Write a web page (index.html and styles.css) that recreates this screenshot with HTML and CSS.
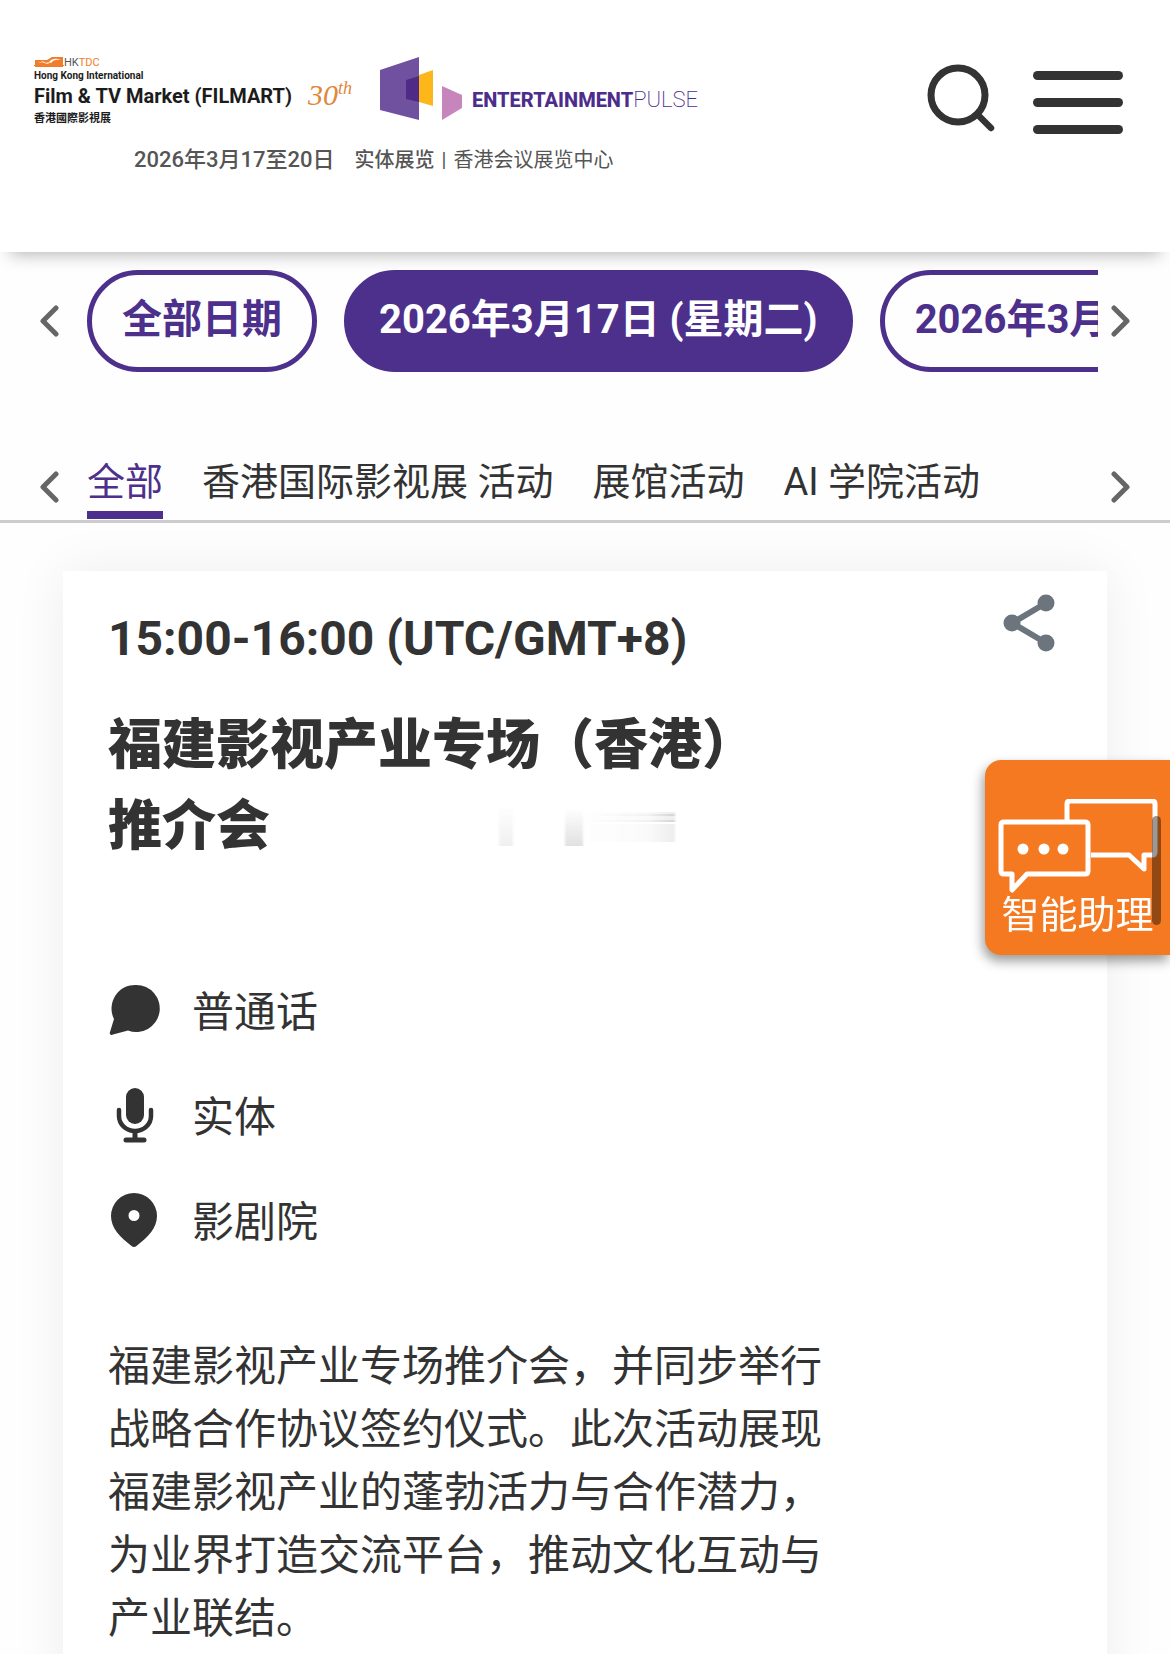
FILE: index.html
```html
<!DOCTYPE html>
<html lang="zh-CN">
<head>
    <meta charset="UTF-8">
    <meta name="viewport" content="width=device-width, initial-scale=1.0">
    <title>香港国际影视展 活动</title>
    <link rel="stylesheet" href="styles.css">
</head>
<body>

    <header class="header">
        <div class="branding">
            <div class="logos">
                <a class="filmart" href="#">
                    <span class="hktdc">
                        <svg width="30" height="10" viewBox="0 0 30 10" aria-hidden="true">
                            <path fill="#ef7d2b" d="M1 0h28v10H1z"/>
                            <path fill="#fff" d="M1 0h17l-5 3H1zM4 6c3-2 6-2 8 0 2-1 3-1 4 0-3 1-4 1-5 0-2-1-4-1-7 0zM15 5c3-4 8-4 12-2-5-1-8 0-10 3z"/>
                            <path stroke="#ef7d2b" d="M0 8.500h30"/>
                        </svg>
                        <span>HK<b>TDC</b></span>
                    </span>
                    <span class="filmart-small">Hong Kong International</span>
                    <span class="filmart-name">Film &amp; TV Market (FILMART)</span>
                    <span class="filmart-tc" lang="zh-HK">香港國際影視展</span>
                </a>
                <span class="anniversary">30<sup>th</sup></span>
                <a class="pulse" href="#">
                    <svg width="84" height="64" viewBox="0 0 84 64" aria-hidden="true">
                        <path fill="#70519f" d="M0 13 39 0v63L0 53z"/>
                        <path fill="#fdb71a" d="m39 18 14-5v36l-14-4z"/>
                        <path fill="#4f2b85" d="m26 23 13-4v26l-13-3z"/>
                        <path fill="#c786bb" d="m62 29 20 9v13L62 63z"/>
                    </svg>
                    <span class="pulse-name"><b>ENTERTAINMENT</b>PULSE</span>
                </a>
            </div>
            <p class="event-date"><b>2026年3月17至20日</b><span><em>实体展览</em><i>|</i>香港会议展览中心</span></p>
        </div>
        <div class="tools">
            <button class="icon-btn" aria-label="搜索">
                <svg width="68" height="68" viewBox="0 0 68 68" fill="none" stroke="#333">
                    <circle cx="31" cy="31" r="27" stroke-width="7"/>
                    <path d="m51 51 13 13" stroke-width="6.500" stroke-linecap="round"/>
                </svg>
            </button>
            <button class="icon-btn" aria-label="菜单">
                <svg width="90" height="64" viewBox="0 0 90 64" fill="#333">
                    <rect width="90" height="9" rx="4.500"/>
                    <rect y="27" width="90" height="9" rx="4.500"/>
                    <rect y="54" width="90" height="9" rx="4.500"/>
                </svg>
            </button>
        </div>
    </header>

    <main>
        <div class="slider dates">
            <button class="arrow" aria-label="上一个日期">
                <svg width="19" height="32" viewBox="0 0 19 32"><path d="M16 3 3 16l13 13"/></svg>
            </button>
            <div class="slider-track">
                <button class="pill">全部日期</button>
                <button class="pill active">2026年3月17日 (星期二)</button>
                <button class="pill">2026年3月18日 (星期三)</button>
            </div>
            <button class="arrow" aria-label="下一个日期">
                <svg width="19" height="32" viewBox="0 0 19 32"><path d="m3 3 13 13L3 29"/></svg>
            </button>
        </div>

        <nav class="slider tabs">
            <button class="arrow" aria-label="上一个分类">
                <svg width="19" height="32" viewBox="0 0 19 32"><path d="M16 3 3 16l13 13"/></svg>
            </button>
            <div class="slider-track">
                <a class="tab active" href="#">全部</a>
                <a class="tab" href="#">香港国际影视展 活动</a>
                <a class="tab" href="#">展馆活动</a>
                <a class="tab" href="#">AI 学院活动</a>
            </div>
            <button class="arrow" aria-label="下一个分类">
                <svg width="19" height="32" viewBox="0 0 19 32"><path d="m3 3 13 13L3 29"/></svg>
            </button>
        </nav>

        <article class="card">
            <div class="card-top">
                <p class="time">15:00-16:00 (UTC/GMT+8)</p>
                <button class="icon-btn" aria-label="分享">
                    <svg width="52" height="58" viewBox="0 0 52 58" fill="#6c757d">
                        <path d="M43 9 9 29l34 20" fill="none" stroke="#6c757d" stroke-width="6"/>
                        <circle cx="43" cy="9" r="8.500"/>
                        <circle cx="9" cy="29" r="8.500"/>
                        <circle cx="43" cy="49" r="8.500"/>
                    </svg>
                </button>
            </div>
            <h2 class="title">福建影视产业专场（香港）推介会</h2>
            <svg class="smudge" width="196" height="40" viewBox="0 0 196 40" aria-hidden="true">
                <defs>
                    <linearGradient id="fadeDown" x2="0" y2="1">
                        <stop offset="0" stop-color="#999" stop-opacity="0"/>
                        <stop offset="1" stop-color="#999" stop-opacity=".3"/>
                    </linearGradient>
                    <linearGradient id="fadeRight">
                        <stop offset="0" stop-color="#999" stop-opacity="0"/>
                        <stop offset=".7" stop-color="#999" stop-opacity=".08"/>
                        <stop offset="1" stop-color="#999" stop-opacity=".3"/>
                    </linearGradient>
                    <filter id="soften" x="-.1" y="-.1" width="1.2" height="1.2">
                        <feGaussianBlur stdDeviation="1.2 .5"/>
                    </filter>
                </defs>
                <g filter="url(#soften)">
                    <path fill="url(#fadeDown)" opacity=".5" d="M14 0h14v38H14z"/>
                    <path fill="url(#fadeDown)" d="M80 0h18v38H80z"/>
                    <path fill="url(#fadeRight)" opacity=".6" d="M98 4h92v30H98z"/>
                    <path fill="url(#fadeRight)" d="M98 6h92v2H98zM98 12h92v2H98z"/>
                    <path fill="#fff" d="M104 14h88v2h-88z"/>
                </g>
            </svg>

            <ul class="info">
                <li>
                    <svg width="54" height="56" viewBox="0 0 54 56" fill="#333" aria-hidden="true">
                        <path d="M28 3a23.500 23.500 0 1 1-8 45.500L5 52.500a2 2 0 0 1-3-2.500L6 37A23.500 23.500 0 0 1 28 3z"/>
                    </svg>
                    普通话
                </li>
                <li>
                    <svg width="54" height="56" viewBox="0 0 54 56" fill="none" stroke="#333" stroke-linecap="round" aria-hidden="true">
                        <rect x="18" y="1" width="18" height="36" rx="9" fill="#333" stroke="none"/>
                        <path d="M11 23v6a16 15 0 0 0 32 0v-6" stroke-width="4.500"/>
                        <path d="M27 45v7" stroke-width="5"/>
                        <path d="M18 53h18" stroke-width="5"/>
                    </svg>
                    实体
                </li>
                <li>
                    <svg width="54" height="56" viewBox="0 0 54 56" fill="#333" aria-hidden="true">
                        <path fill-rule="evenodd" d="M26 1a23 23 0 0 1 23 23c0 12-9 21-20.500 30a4 4 0 0 1-5 0C12 45 3 36 3 24A23 23 0 0 1 26 1zm0 17a5.500 5.500 0 1 0 0 11 5.500 5.500 0 0 0 0-11z"/>
                    </svg>
                    影剧院
                </li>
            </ul>

            <p class="description">福建影视产业专场推介会，并同步举行战略合作协议签约仪式。此次活动展现福建影视产业的蓬勃活力与合作潜力，为业界打造交流平台，推动文化互动与产业联结。</p>
        </article>
    </main>

    <button class="assistant">
        <svg width="160" height="94" viewBox="0 0 160 94" fill="none" stroke="#fff" stroke-width="5" stroke-linejoin="round" aria-hidden="true">
            <path d="M69 22V5q0-3 3-3h82q3 0 3 3v48q0 3-3 3h-8v14L131 56H93"/>
            <path d="M6 23h81q3 0 3 3v46q0 3-3 3H29L14 91V75H6q-3 0-3-3V26q0-3 3-3z"/>
            <g fill="#fff" stroke="none">
                <circle cx="25" cy="50" r="5.500"/>
                <circle cx="46" cy="50" r="5.500"/>
                <circle cx="65" cy="50" r="5.500"/>
            </g>
        </svg>
        <span>智能助理</span>
    </button>
    <div class="scroll-thumb"></div>

</body>
</html>
```
FILE: styles.css
```css
* {
    box-sizing: border-box;
}
body {
    margin: 0;
    height: 100vh;
    overflow: hidden;
    background-color: #fefefe;
    color: #333;
    font-family: Roboto, "Noto Sans CJK SC", sans-serif;
}
button {
    font-family: inherit;
    background: none;
    border: none;
    padding: 0;
    cursor: pointer;
}
a {
    color: inherit;
    text-decoration: none;
}
svg {
    display: block;
    flex: none;
}

/* Header */
.header {
    position: relative;
    display: flex;
    justify-content: space-between;
    height: 252px;
    padding: 56px 47px 0 34px;
    background-color: #fff;
    box-shadow: 0 12px 16px -10px rgba(0, 0, 0, 0.3);
}
.logos {
    display: flex;
    align-items: flex-start;
}
.filmart {
    display: flex;
    flex-direction: column;
    color: #1c1c1c;
    font-weight: 700;
    white-space: nowrap;
}
.hktdc {
    display: flex;
    align-items: center;
    height: 12px;
    color: #555;
    font-size: 11px;
    font-weight: 400;
}
.hktdc b {
    color: #ef7d2b;
    font-weight: 400;
}
.filmart-small {
    font-size: 10px;
    line-height: 16px;
}
.filmart-name {
    font-size: 20px;
    line-height: 24px;
}
.filmart-tc {
    font-family: "Noto Sans CJK TC", sans-serif;
    font-size: 11px;
    line-height: 18px;
}
.anniversary {
    margin: 24px 0 0 16px;
    color: #e0873c;
    font-family: "Liberation Serif", serif;
    font-style: italic;
    font-size: 30px;
    line-height: 30px;
}
.anniversary sup {
    font-size: 18px;
    line-height: 0;
}
.pulse {
    display: flex;
    margin-left: 28px;
    padding-top: 1px;
    color: #4d2d8c;
}
.pulse-name {
    margin: 31px 0 0 8px;
    font-size: 22px;
    font-weight: 200;
    line-height: 24px;
}
.pulse-name b {
    font-size: 20px;
    font-weight: 800;
}
.event-date {
    display: flex;
    gap: 20px;
    margin: 18px 0 0 100px;
    color: #555;
    font-size: 20px;
    line-height: 32px;
}
.event-date b {
    font-size: 22px;
    font-weight: 500;
}
.event-date em {
    font-style: normal;
    font-weight: 500;
}
.event-date i {
    margin: 0 7px;
    font-style: normal;
}
.tools {
    display: flex;
    align-items: flex-start;
    gap: 38px;
    padding-top: 8px;
}
.tools .icon-btn + .icon-btn {
    padding-top: 7px;
}

/* Date and category sliders */
.slider {
    display: flex;
    align-items: center;
    padding: 0 40px;
}
.slider-track {
    display: flex;
    flex: 1;
    min-width: 0;
    margin: 0 13px 0 28px;
    overflow: hidden;
}
.arrow svg {
    fill: none;
    stroke: #666;
    stroke-width: 5;
    stroke-linecap: round;
    stroke-linejoin: round;
}
.dates {
    padding-top: 18px;
}
.dates .slider-track {
    gap: 27px;
}
.pill {
    flex: none;
    height: 102px;
    padding: 0 30px 10px;
    border: 5px solid #4d2f8c;
    border-radius: 52px;
    color: #4d2f8c;
    font-size: 40px;
    font-weight: 700;
    white-space: nowrap;
}
.pill.active {
    background-color: #4d2f8c;
    color: #fff;
}
.tabs {
    margin-top: 79px;
    border-bottom: 3px solid #ccc;
}
.tabs .slider-track {
    gap: 39px;
}
.tabs .arrow {
    padding-top: 2px;
}
.tab {
    flex: none;
    height: 68px;
    margin-bottom: 1px;
    font-size: 38px;
    line-height: 62px;
    white-space: nowrap;
}
.tab.active {
    border-bottom: 8px solid #4d2f8c;
    color: #4d2f8c;
}

/* Event card */
.card {
    position: relative;
    min-height: 1200px;
    margin: 48px 63px 0;
    padding: 23px 45px;
    background-color: #fff;
    box-shadow: 0 0 50px rgba(0, 0, 0, 0.07);
}
.card-top {
    display: flex;
    justify-content: space-between;
    align-items: flex-start;
}
.card-top .icon-btn {
    padding-right: 7px;
}
.time {
    margin: 17px 0 0;
    font-size: 48px;
    font-weight: 700;
    line-height: 56px;
}
.title {
    max-width: 72%;
    margin: 38px 0 0;
    font-size: 54px;
    font-weight: 900;
    line-height: 81px;
}
.smudge {
    position: absolute;
    top: 237px;
    left: 422px;
}
.info {
    display: grid;
    gap: 43px;
    margin: 115px 0 0;
    padding: 0;
    list-style: none;
    font-size: 42px;
    line-height: 62px;
}
.info li {
    display: flex;
    gap: 30px;
}
.description {
    max-width: 77%;
    margin: 81px 0 0;
    font-size: 42px;
    line-height: 63px;
}

/* Chat button fixed to the right edge */
.assistant {
    position: fixed;
    top: 760px;
    right: 0;
    display: flex;
    flex-direction: column;
    align-items: center;
    width: 185px;
    height: 195px;
    padding: 39px 10px 0;
    border-radius: 16px 0 0 16px;
    background-color: #f47920;
    box-shadow: -2px 6px 12px rgba(0, 0, 0, 0.4);
    color: #fff;
    font-size: 38px;
    line-height: 44px;
    white-space: nowrap;
}
.scroll-thumb {
    position: fixed;
    top: 816px;
    right: 9px;
    width: 9px;
    height: 109px;
    border-radius: 5px;
    background-color: rgba(0, 0, 0, 0.4);
}
```
